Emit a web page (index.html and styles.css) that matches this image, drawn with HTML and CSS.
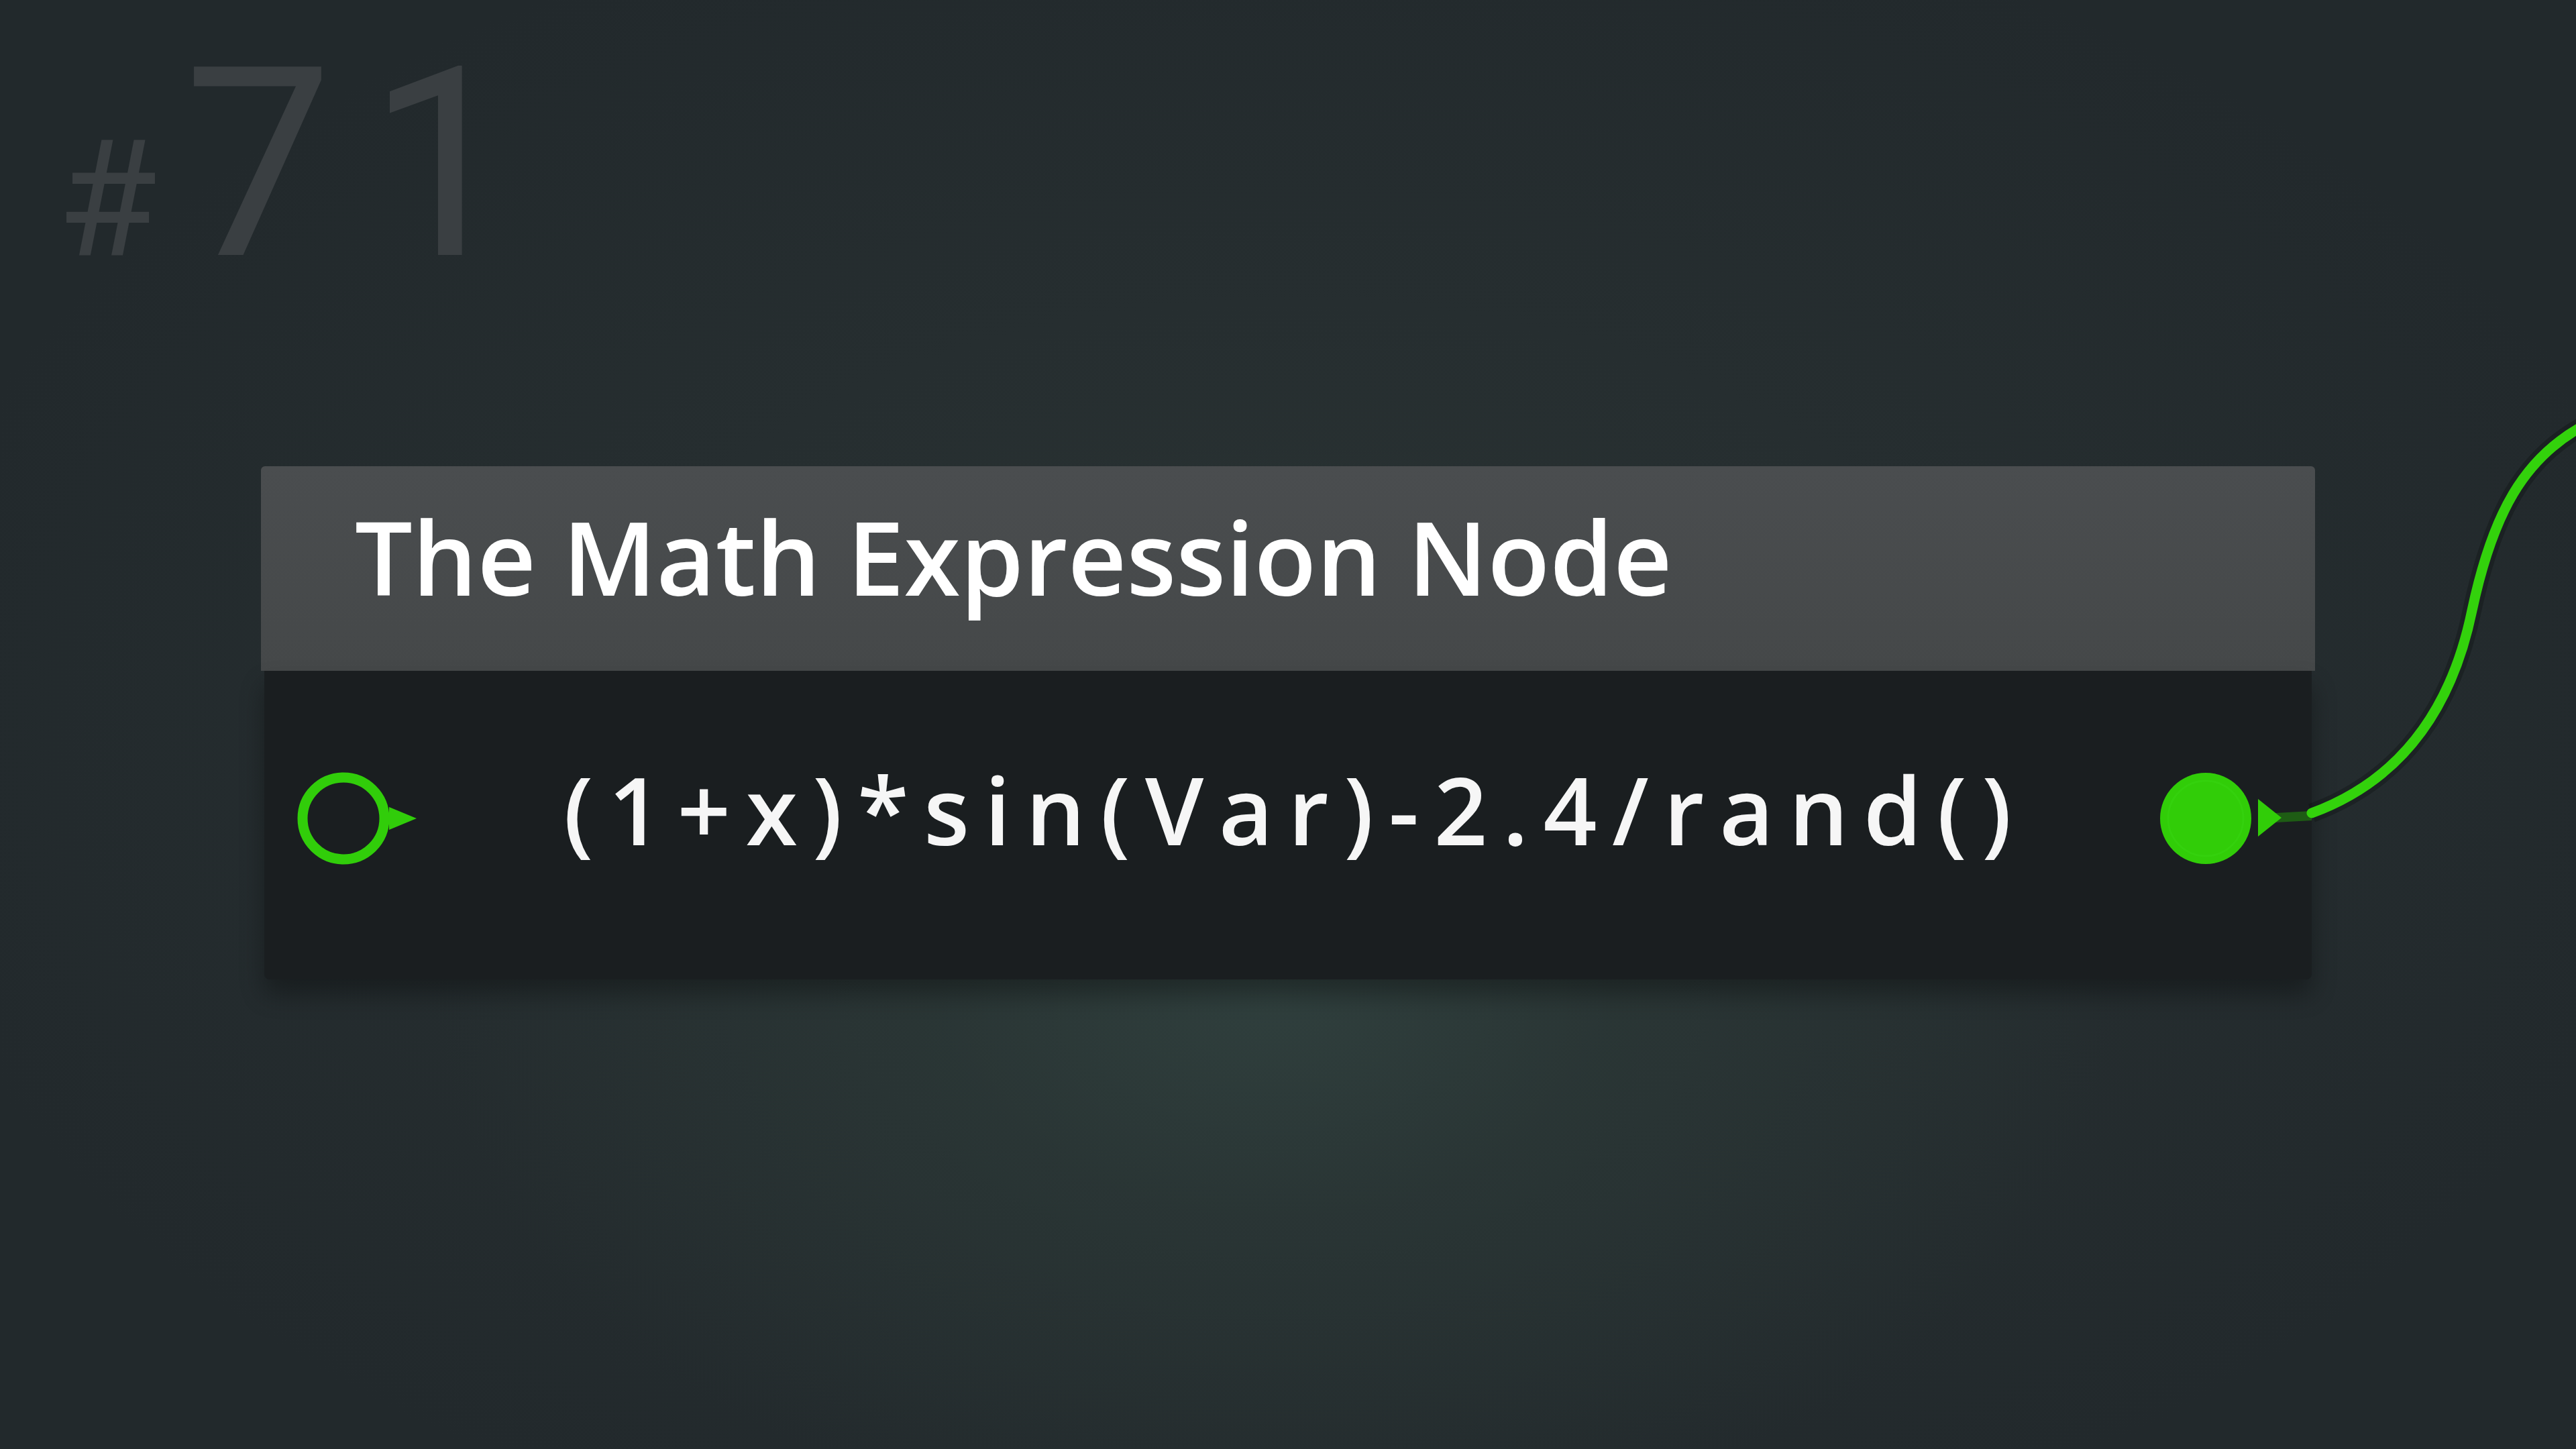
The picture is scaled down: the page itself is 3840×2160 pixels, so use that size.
FILE: index.html
```html
<!DOCTYPE html>
<html>
<head>
<meta charset="utf-8">
<link rel="stylesheet" href="styles.css">
</head>
<body>
<div class="canvas">
  <div class="node-id"><span class="hash">#</span><span class="num">71</span></div>

  <svg class="wires" width="3840" height="2160" viewBox="0 0 3840 2160">
    <path class="wire-shade" d="M3446,1212 C3560,1170 3650,1080 3685,910 C3715,770 3760,680 3860,630"/>
    <path class="wire" d="M3446,1212 C3560,1170 3650,1080 3685,910 C3715,770 3760,680 3860,630"/>
  </svg>

  <div class="node">
    <div class="node-header">The Math Expression Node</div>
    <div class="node-body">
      <svg class="port port-in" width="180" height="140" viewBox="0 0 180 140">
        <circle cx="69" cy="70" r="61" fill="none" stroke="#31cd0a" stroke-width="15"/>
        <polygon points="137,53 178,70 137,87" fill="#31cd0a"/>
      </svg>
      <span class="expr">(1+x)*sin(Var)-2.4/rand()</span>
      <svg class="port port-out" width="226" height="140" viewBox="0 0 226 140">
        <line x1="172" y1="69" x2="226" y2="66" stroke="#1e5c14" stroke-width="14"/>
        <circle cx="68" cy="70" r="68" fill="#31cd08"/>
        <circle cx="68" cy="70" r="56" fill="none" stroke="#38d612" stroke-width="3" opacity="0.5"/>
        <polygon points="146,41 181,69 146,97" fill="#31cd08"/>
      </svg>
    </div>
  </div>
</div>
</body>
</html>
```

FILE: styles.css
```css
html, body {
  margin: 0;
  padding: 0;
}

body {
  width: 3840px;
  height: 2160px;
  overflow: hidden;
  font-family: "Open Sans", "Liberation Sans", sans-serif;
}

.canvas {
  position: relative;
  width: 3840px;
  height: 2160px;
  background-color: #22292c;
  background-image:
    radial-gradient(ellipse 1250px 820px at 1900px 1480px, rgba(48, 64, 62, 0.95) 0%, rgba(44, 58, 56, 0.6) 40%, rgba(34, 41, 44, 0) 100%),
    radial-gradient(ellipse 2100px 1300px at 1920px 1100px, #2a3333 0%, #262e30 50%, #22292c 100%);
}

.node-id {
  position: absolute;
  left: 85px;
  top: 95px;
  color: #3a3f42;
  font-family: Roboto, "Open Sans", sans-serif;
  font-weight: 400;
  font-size: 395px;
  line-height: 300px;
  white-space: nowrap;
}

.hash {
  font-size: 242px;
  letter-spacing: 40px;
}

.num {
  font-size: 395px;
  letter-spacing: 52px;
}

.wires {
  position: absolute;
  left: 0;
  top: 0;
  z-index: 2;
}

.wire {
  fill: none;
  stroke: #33d20c;
  stroke-width: 15;
  stroke-linecap: round;
}

.wire-shade {
  fill: none;
  stroke: rgba(10, 14, 14, 0.3);
  stroke-width: 28;
}

.node {
  position: absolute;
  left: 389px;
  top: 695px;
  width: 3062px;
  display: flex;
  flex-direction: column;
  z-index: 1;
}

.node-header {
  height: 305px;
  box-sizing: border-box;
  padding-left: 140px;
  display: flex;
  align-items: center;
  padding-bottom: 36px;
  background: linear-gradient(#4a4d4f, #454849);
  border-radius: 6px 6px 0 0;
  color: #ffffff;
  font-size: 152px;
  font-weight: 600;
  white-space: nowrap;
}

.node-body {
  margin: 0 5px;
  height: 460px;
  box-sizing: border-box;
  padding-top: 150px;
  padding-left: 49px;
  display: flex;
  align-items: flex-start;
  background: #1a1e20;
  border-radius: 0 0 8px 8px;
  box-shadow: 0 22px 36px rgba(0, 0, 0, 0.32);
}

.port {
  display: block;
  flex: none;
}

.expr {
  margin-left: 217px;
  height: 140px;
  line-height: 112px;
  color: #f6f6f6;
  font-size: 140px;
  font-weight: 600;
  letter-spacing: 22.4px;
  white-space: nowrap;
}

.port-out {
  margin-left: auto;
}
```
